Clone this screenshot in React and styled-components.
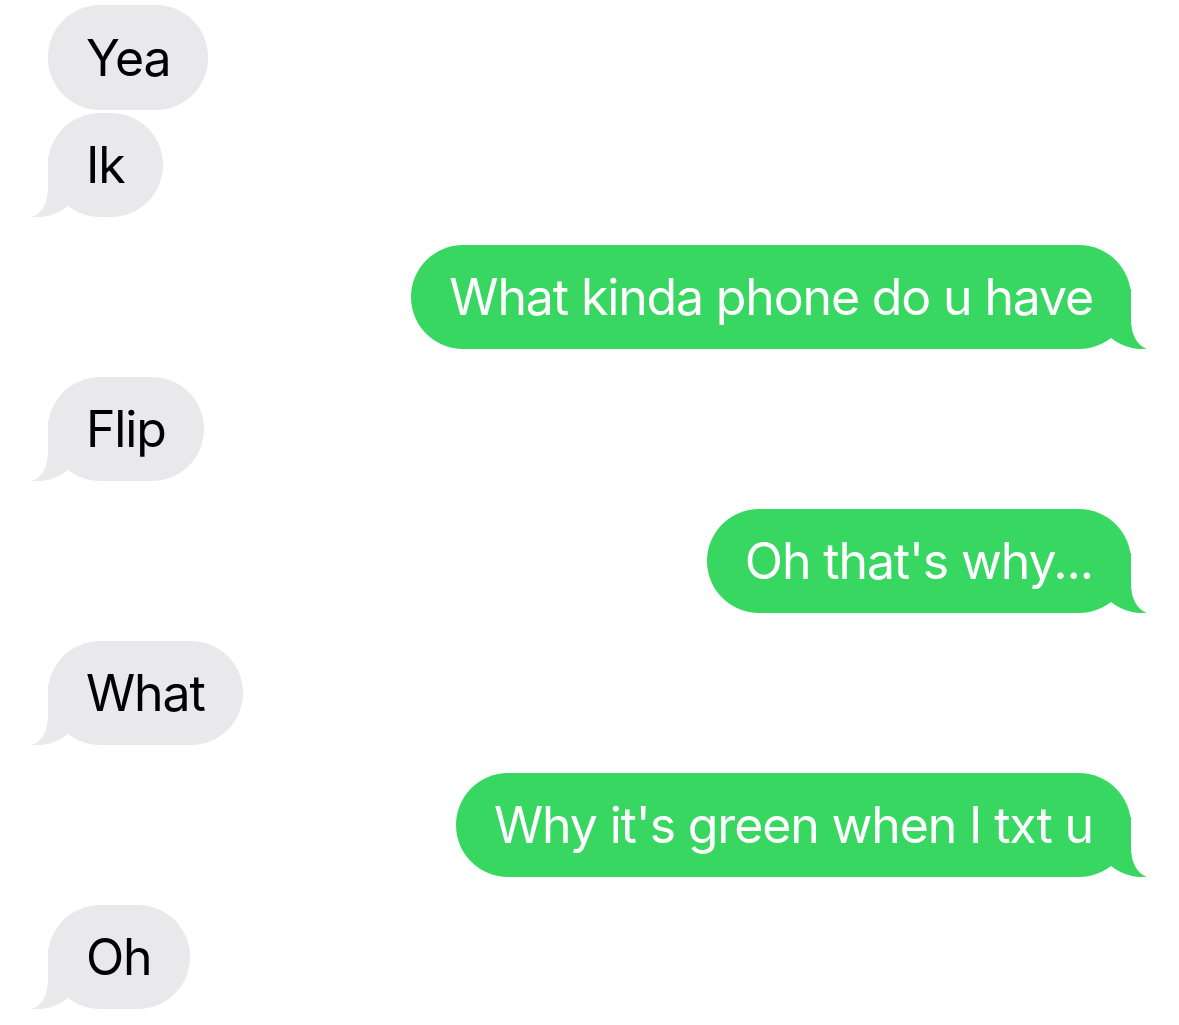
import React from "react";
import styled, { createGlobalStyle, css } from "styled-components";

const Global = createGlobalStyle`
  html, body { margin: 0; padding: 0; background: #ffffff; }
  body { font-family: Inter, "Noto Sans", "Liberation Sans", sans-serif; }
`;

const GREY = "#e9e9eb";
const GREEN = "#38d762";

const Thread = styled.div`
  display: flex;
  flex-direction: column;
  padding: 5px 48px 0 48px;
  width: 1179px;
  box-sizing: border-box;
`;

const Row = styled.div`
  display: flex;
  justify-content: ${(p) => (p.$me ? "flex-end" : "flex-start")};
  margin-top: ${(p) => (p.$first ? 0 : p.$same ? 3 : 28)}px;
`;

const Bubble = styled.div`
  position: relative;
  display: flex;
  align-items: center;
  height: ${(p) => (p.$tall ? 105 : 104)}px;
  padding: 0 38px;
  border-radius: 52px;
  font-size: 50px;
  letter-spacing: -1.15px;
  white-space: nowrap;
  ${(p) =>
    p.$me
      ? css`
          background: ${GREEN};
          color: #ffffff;
        `
      : css`
          background: ${GREY};
          color: #000000;
        `}
`;

const Label = styled.span`
  position: relative;
  z-index: 1;
`;

const TailSvg = styled.svg`
  position: absolute;
  bottom: 0;
  width: 40px;
  height: 60px;
  ${(p) =>
    p.$me
      ? css`
          right: -16px;
          transform: scaleX(-1);
        `
      : css`
          left: -16px;
        `}
`;

function Tail({ me }) {
  return (
    <TailSvg $me={me} viewBox="0 0 40 60" aria-hidden="true">
      <path
        d="M16 0 L16 30 C16 46 10 56 0 60 C14 61 26 57 36 49 L40 0 Z"
        fill={me ? GREEN : GREY}
      />
    </TailSvg>
  );
}

const messages = [
  { me: false, text: "Yea", tail: false },
  { me: false, text: "Ik", tail: true },
  { me: true, text: "What kinda phone do u have", tail: true },
  { me: false, text: "Flip", tail: true },
  { me: true, text: "Oh that's why...", tail: true },
  { me: false, text: "What", tail: true },
  { me: true, text: "Why it's green when I txt u", tail: true },
  { me: false, text: "Oh", tail: true },
];

export default function App() {
  return (
    <>
      <Global />
      <Thread>
        {messages.map((m, i) => (
          <Row
            key={i}
            $me={m.me}
            $first={i === 0}
            $same={i > 0 && messages[i - 1].me === m.me}
          >
            <Bubble $me={m.me} $tall={i === 0}>
              {m.tail && <Tail me={m.me} />}
              <Label>{m.text}</Label>
            </Bubble>
          </Row>
        ))}
      </Thread>
    </>
  );
}
